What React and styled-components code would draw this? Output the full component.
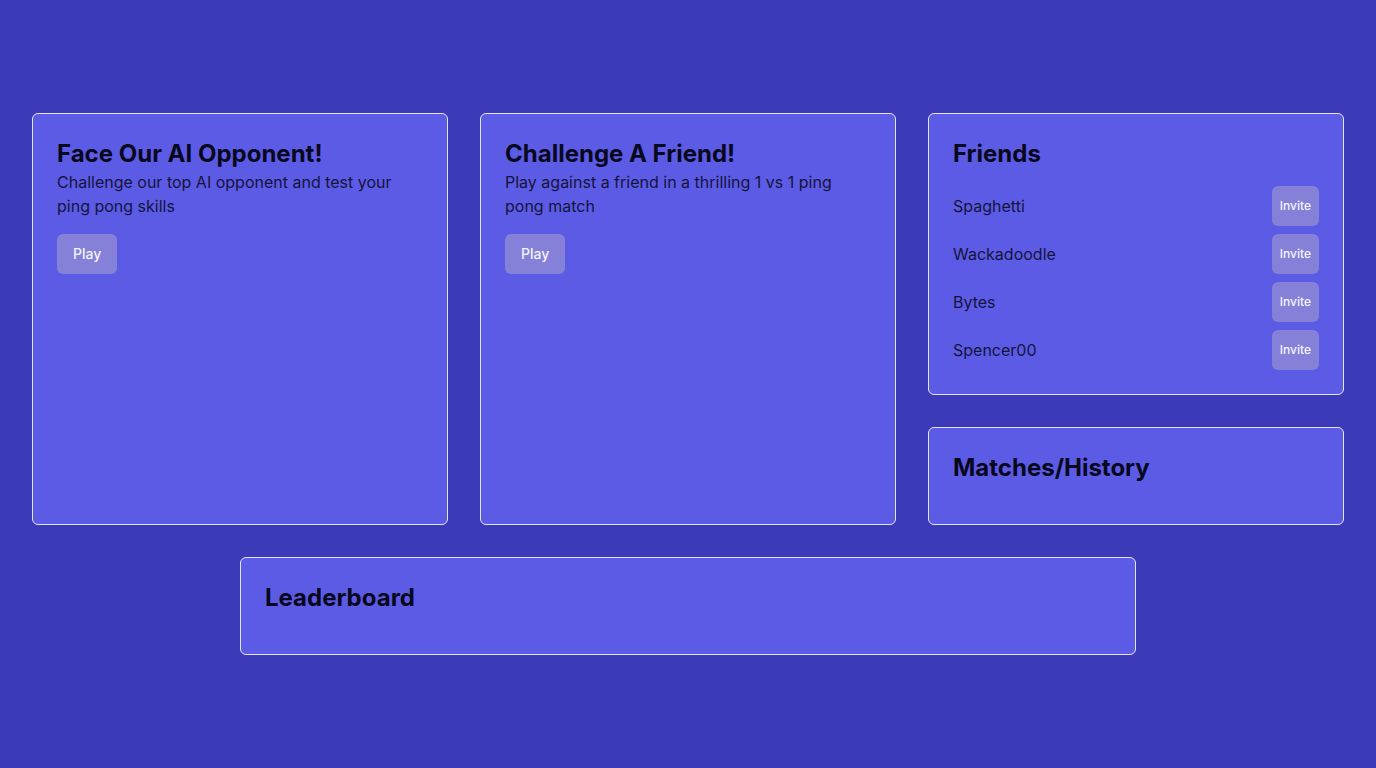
import styled, { createGlobalStyle } from 'styled-components';

const Global = createGlobalStyle`
  * { box-sizing: border-box; }
  body {
    margin: 0;
    background-color: #3d3ab9;
    font-family: Inter, "Noto Sans", sans-serif;
    color: #111133;
  }
`;

const Page = styled.main`
  min-height: 100vh;
  display: flex;
  flex-direction: column;
  justify-content: center;
  align-items: center;
  gap: 32px;
  padding: 0 32px;
`;

const Grid = styled.div`
  width: 100%;
  display: grid;
  grid-template-columns: repeat(3, 1fr);
  gap: 32px;
`;

const Column = styled.div`
  display: flex;
  flex-direction: column;
  gap: 32px;
`;

const Card = styled.section`
  background-color: #5c5be5;
  border: 1px solid #e4e4f7;
  border-radius: 6px;
  padding: 24px;
  height: ${({ $tall }) => ($tall ? '412px' : 'auto')};
  width: 100%;
  max-width: ${({ $narrow }) => ($narrow ? '896px' : 'none')};
`;

const Title = styled.h2`
  margin: 0;
  font: 700 24px/32px Inter, "Noto Sans", sans-serif;
  color: #08081c;
`;

const Text = styled.p`
  margin: 0;
  font: 400 16px/24px Inter, "Noto Sans", sans-serif;
  color: #14143d;
`;

const Button = styled.button`
  border: none;
  border-radius: 6px;
  background-color: #8581d8;
  color: #f4f4ff;
  font-family: Inter, "Noto Sans", sans-serif;
  font-weight: 500;
  font-size: ${({ $small }) => ($small ? '12px' : '14px')};
  line-height: 24px;
  padding: 8px ${({ $small }) => ($small ? '8px' : '16px')};
  cursor: pointer;
`;

const Actions = styled.div`
  margin-top: 16px;
`;

const List = styled.ul`
  list-style: none;
  margin: 16px 0 0;
  padding: 0;
  display: flex;
  flex-direction: column;
  gap: 8px;
`;

const Friend = styled.li`
  display: flex;
  align-items: center;
  justify-content: space-between;
`;

const friends = ['Spaghetti', 'Wackadoodle', 'Bytes', 'Spencer00'];

const App = () => {
  return (
    <>
      <Global />
      <Page>
        <Grid>
          <Card $tall>
            <Title>Face Our AI Opponent!</Title>
            <Text>Challenge our top AI opponent and test your ping pong skills</Text>
            <Actions>
              <Button>Play</Button>
            </Actions>
          </Card>
          <Card $tall>
            <Title>Challenge A Friend!</Title>
            <Text>Play against a friend in a thrilling 1 vs 1 ping pong match</Text>
            <Actions>
              <Button>Play</Button>
            </Actions>
          </Card>
          <Column>
            <Card>
              <Title>Friends</Title>
              <List>
                {friends.map((name) => (
                  <Friend key={name}>
                    <Text>{name}</Text>
                    <Button $small>Invite</Button>
                  </Friend>
                ))}
              </List>
            </Card>
            <Card>
              <Title>Matches/History</Title>
              <List />
            </Card>
          </Column>
        </Grid>
        <Card $narrow>
          <Title>Leaderboard</Title>
          <List />
        </Card>
      </Page>
    </>
  );
};

export default App;
